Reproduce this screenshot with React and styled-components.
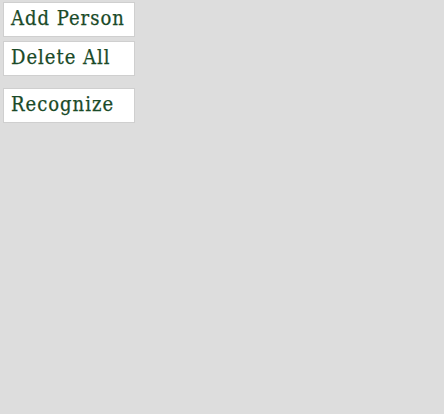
import styled, { createGlobalStyle } from "styled-components";

const Global = createGlobalStyle`
  html, body {
    margin: 0;
    background: #dddddd;
  }
  body {
    padding: 2px 3px;
    font-family: "DejaVu Serif Condensed", "DejaVu Serif", serif;
  }
`;

const Panel = styled.div`
  display: flex;
  flex-direction: column;
  align-items: flex-start;
`;

const Button = styled.button`
  width: 132px;
  height: 35px;
  margin-bottom: ${(p) => (p.$gap ? "12px" : "4px")};
  padding: 0 0 3px 7px;
  text-align: left;
  background: #ffffff;
  border: 1px solid #cfcfcf;
  color: #1a4a28;
  font-family: "DejaVu Serif Condensed", "DejaVu Serif", serif;
  font-size: 20px;
  letter-spacing: 1px;
  -webkit-text-stroke: 0.25px #1a4a28;
  cursor: pointer;
`;

export default function App() {
  return (
    <>
      <Global />
      <Panel>
        <Button>Add Person</Button>
        <Button $gap>Delete All</Button>
        <Button>Recognize</Button>
      </Panel>
    </>
  );
}
